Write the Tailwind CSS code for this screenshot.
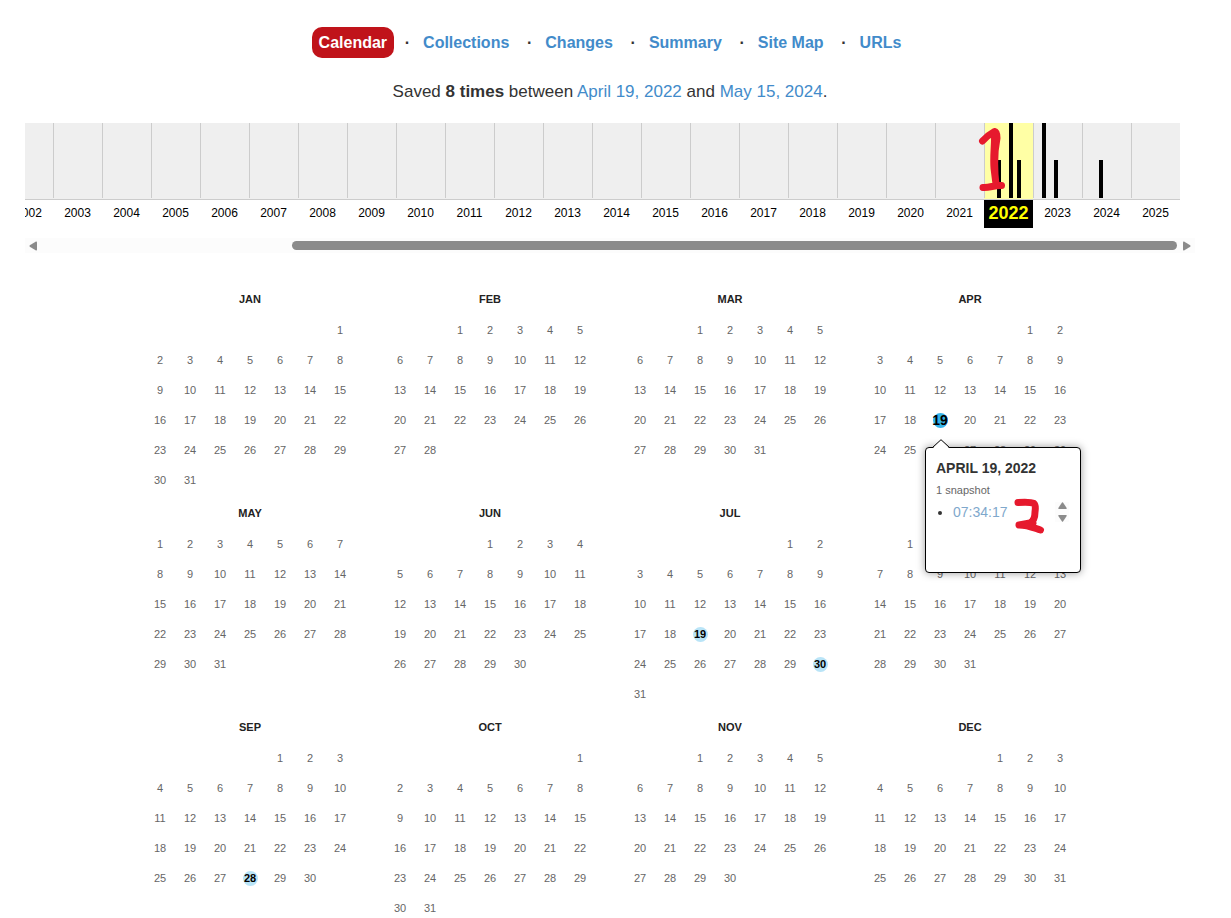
<!DOCTYPE html>
<html lang="en">
<head>
  <meta charset="UTF-8">
  <meta name="viewport" content="width=device-width, initial-scale=1.0">
  <title>Calendar - Saved Pages</title>
  <script src="https://cdn.jsdelivr.net/npm/@tailwindcss/browser@4"></script>
</head>
<body class="bg-white font-['Liberation_Sans',Arial,sans-serif] text-[#333]">
  <main class="pt-[27px] pl-[25px] pr-[36px]">
    <nav class="flex justify-center text-base font-bold leading-[31px]">
      <a href="#calendar" class="rounded-[10px] bg-[#c0131a] px-[7px] text-white">Calendar</a>
      <span class="w-[22px] pr-[6px] text-right">·</span>
      <a href="#collections" class="px-[7px] text-[#428bca]">Collections</a>
      <span class="w-[22px] pr-[6px] text-right">·</span>
      <a href="#changes" class="px-[7px] text-[#428bca]">Changes</a>
      <span class="w-[22px] pr-[6px] text-right">·</span>
      <a href="#summary" class="px-[7px] text-[#428bca]">Summary</a>
      <span class="w-[22px] pr-[6px] text-right">·</span>
      <a href="#sitemap" class="px-[7px] text-[#428bca]">Site Map</a>
      <span class="w-[22px] pr-[6px] text-right">·</span>
      <a href="#urls" class="px-[7px] text-[#428bca]">URLs</a>
    </nav>

    <p class="mt-[22px] text-center text-[17px] leading-6">
      Saved <b>8 times</b> between <a href="#first" class="text-[#428bca]">April 19, 2022</a> and <a href="#last" class="text-[#428bca]">May 15, 2024</a>.
    </p>

    <div id="timeline" class="mt-[19px] mr-[15px] flex justify-end overflow-hidden"></div>

    <div class="mt-[10px] flex h-[15px] items-center bg-[#fcfcfc] px-1">
      <svg class="h-[10px] w-2" viewBox="0 0 8 10" fill="#8b8b8b"><path d="M7 .5Q8 .2 8 1.500V8.500Q8 9.800 7 9.500L.8 5.800Q0 5 .8 4.200Z"/></svg>
      <div class="mx-[6px] flex flex-1 justify-end">
        <div class="h-[9px] w-[78%] rounded-full bg-[#8b8b8b]"></div>
      </div>
      <svg class="h-[10px] w-2" viewBox="0 0 8 10" fill="#8b8b8b"><path d="M1 .5Q0 .2 0 1.500V8.500Q0 9.800 1 9.500L7.200 5.800Q8 5 7.200 4.200Z"/></svg>
    </div>

    <div id="calendar" class="mt-7 grid grid-cols-[repeat(4,240px)] justify-center"></div>
  </main>

  <template id="mark-one">
    <svg class="absolute -left-[6px] top-[3px] z-10 h-[70px] w-[30px]" viewBox="0 0 30 70" fill="none" stroke="#e6192d" stroke-width="7" stroke-linecap="round" stroke-linejoin="round">
      <path d="M4.500 15C8 11 12 8 16.500 5.500Q19 6 19 12C16 27 16 42 18 59M16.500 8C17 18 15 30 16 42L18 58M5 61.500C12 62 16 59 23.500 59.500"/>
    </svg>
  </template>

  <template id="snapshot-popup">
    <div class="absolute left-0 top-[42px] z-20 h-[126px] w-[156px] rounded-[4px] border border-black bg-white px-[10px] pt-[10px] text-left font-normal text-[#333] shadow-[0_0_8px_rgba(0,0,0,0.4)]">
      <svg class="absolute left-[6px] -top-[9px] h-[10px] w-[18px]" viewBox="0 0 18 10"><path d="M0 10L1 9L9 1L17 9L18 10Z" fill="#fff"/><path d="M.5 8.500L9 .7L17.500 8.500" fill="none" stroke="#000"/></svg>
      <h2 class="whitespace-nowrap text-sm font-bold leading-5">APRIL 19, 2022</h2>
      <p class="mt-1 text-[11px] leading-4 text-[#666]">1 snapshot</p>
      <div class="mt-1 flex items-center">
        <ul class="list-disc pl-[17px] text-sm leading-5">
          <li><a href="#073417" class="text-[#7fa8cc]">07:34:17</a></li>
        </ul>
        <svg class="absolute left-[87px] top-[49px] h-[37px] w-[32px]" viewBox="0 0 32 37" fill="none" stroke="#e6192d" stroke-width="7" stroke-linecap="round" stroke-linejoin="round"><path d="M5 5.500C12 5 18 5 21 6.500Q23 8 22 15C22 20 21 24 17 26L6 28L17 26M6 28C15 28 21 31 27.500 33M14 27.500L20 26"/></svg>
        <div class="mr-px ml-auto flex h-5 w-[14px] flex-col items-center justify-between bg-[#fcfcfc]">
          <svg class="h-[7px] w-[9px]" viewBox="0 0 9 7" fill="#8b8b8b"><path d="M.3 6L4 .6Q4.500 0 5 .6L8.700 6Q9 7 8 7H1Q0 7 .3 6Z"/></svg>
          <svg class="h-[7px] w-[9px]" viewBox="0 0 9 7" fill="#8b8b8b"><path d="M.3 1L4 6.400Q4.500 7 5 6.400L8.700 1Q9 0 8 0H1Q0 0 .3 1Z"/></svg>
        </div>
      </div>
    </div>
  </template>

  <script>
    // captures per month index, as a percentage of the busiest month
    const captures = {
      2022: { 3: 51, 6: 100, 8: 51 },
      2023: { 2: 100, 5: 51 },
      2024: { 4: 51 }
    };
    const selectedYear = 2022;
    const timeline = document.getElementById("timeline");

    for (let year = 2002; year <= 2025; year++) {
      const selected = year === selectedYear;
      let bars = "";
      for (let m = 0; m < 12; m++) {
        const height = (captures[year] && captures[year][m]) || 0;
        bars += `<span class="w-1 bg-black" style="height: ${height}%"></span>`;
      }
      timeline.innerHTML += `
        <button type="button" class="relative block w-[49px] shrink-0 text-center">
          <span class="block border-b border-[#ccc] pb-px ${selected ? "bg-[#ffffa5]" : "bg-[#efefef]"}">
            <span class="flex h-[75px] items-end border-l border-[#ccc]">${bars}</span>
          </span>
          <span class="block h-7 ${selected ? "bg-black text-lg font-bold leading-[27px] text-[#ff0]" : "text-xs leading-[27px] text-black"}">${year}</span>
          ${selected ? document.getElementById("mark-one").innerHTML : ""}
        </button>`;
    }

    const months = ["JAN", "FEB", "MAR", "APR", "MAY", "JUN", "JUL", "AUG", "SEP", "OCT", "NOV", "DEC"];
    const saved = ["3-19", "6-19", "6-30", "8-28"];
    const openDay = "3-19";

    function dayCell(month, day) {
      const key = month + "-" + day;
      if (key === openDay) {
        return `<td class="relative p-0"><a href="#${key}" class="mx-auto flex size-[15px] items-center justify-center rounded-full bg-[#34b4eb] text-sm font-bold leading-[15px] text-black">${day}</a>${document.getElementById("snapshot-popup").innerHTML}</td>`;
      }
      if (saved.includes(key)) {
        return `<td class="p-0"><a href="#${key}" class="mx-auto flex size-[15px] items-center justify-center rounded-full bg-[#b9e4f7] font-bold leading-[15px] text-black">${day}</a></td>`;
      }
      return `<td class="p-0">${day}</td>`;
    }

    document.getElementById("calendar").innerHTML = months.map((name, month) => {
      const first = new Date(selectedYear, month, 1).getDay();
      const count = new Date(selectedYear, month + 1, 0).getDate();
      let rows = "";
      for (let week = 0; week < 6; week++) {
        let cells = "";
        for (let d = 0; d < 7; d++) {
          const day = week * 7 + d - first + 1;
          cells += day > 0 && day <= count ? dayCell(month, day) : "<td></td>";
        }
        rows += `<tr class="h-[30px]">${cells}</tr>`;
      }
      return `
        <table class="mx-auto w-[210px] table-fixed text-center text-[11px] leading-4 text-[#666]">
          <caption class="h-[34px] pt-[10px] font-bold text-[#222]">${name}</caption>
          <tbody>${rows}</tbody>
        </table>`;
    }).join("");
  </script>
</body>
</html>
